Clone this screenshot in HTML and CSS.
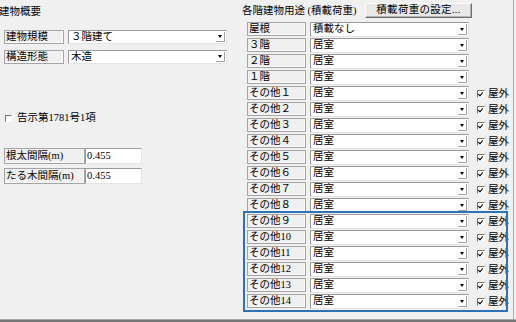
FILE: index.html
```html
<!DOCTYPE html>
<html lang="ja">
<head>
<meta charset="utf-8">
<link rel="stylesheet" href="styles.css">
</head>
<body>
<div class="window">
  <div class="left">
    <div class="title">建物概要</div>
    <div class="frow first">
      <span class="lbl w60">建物規模</span>
      <div class="combo w159"><span class="val">３階建て</span><span class="arrow"></span></div>
    </div>
    <div class="frow second">
      <span class="lbl w60">構造形態</span>
      <div class="combo w159"><span class="val">木造</span><span class="arrow"></span></div>
    </div>
    <div class="chkrow">
      <span class="cb"></span><span class="chktext">告示第1781号1項</span>
    </div>
    <div class="irow first">
      <span class="lbl w82 tall">根太間隔(m)</span>
      <span class="input">0.455</span>
    </div>
    <div class="irow next">
      <span class="lbl w82 tall">たる木間隔(m)</span>
      <span class="input">0.455</span>
    </div>
  </div>
  <div class="right">
    <div class="head">
      <span class="htitle">各階建物用途 (積載荷重)</span>
      <span class="btn">積載荷重の設定...</span>
    </div>
    <div class="rows">
      <div class="row"><span class="lbl w59">屋根</span><div class="combo w159"><span class="val">積載なし</span><span class="arrow"></span></div></div>
      <div class="row"><span class="lbl w59">３階</span><div class="combo w159"><span class="val">居室</span><span class="arrow"></span></div></div>
      <div class="row"><span class="lbl w59">２階</span><div class="combo w159"><span class="val">居室</span><span class="arrow"></span></div></div>
      <div class="row"><span class="lbl w59">１階</span><div class="combo w159"><span class="val">居室</span><span class="arrow"></span></div></div>
      <div class="row"><span class="lbl w59">その他１</span><div class="combo w159"><span class="val">居室</span><span class="arrow"></span></div><span class="cbx"></span><span class="out">屋外</span></div>
      <div class="row"><span class="lbl w59">その他２</span><div class="combo w159"><span class="val">居室</span><span class="arrow"></span></div><span class="cbx"></span><span class="out">屋外</span></div>
      <div class="row"><span class="lbl w59">その他３</span><div class="combo w159"><span class="val">居室</span><span class="arrow"></span></div><span class="cbx"></span><span class="out">屋外</span></div>
      <div class="row"><span class="lbl w59">その他４</span><div class="combo w159"><span class="val">居室</span><span class="arrow"></span></div><span class="cbx"></span><span class="out">屋外</span></div>
      <div class="row"><span class="lbl w59">その他５</span><div class="combo w159"><span class="val">居室</span><span class="arrow"></span></div><span class="cbx"></span><span class="out">屋外</span></div>
      <div class="row"><span class="lbl w59">その他６</span><div class="combo w159"><span class="val">居室</span><span class="arrow"></span></div><span class="cbx"></span><span class="out">屋外</span></div>
      <div class="row"><span class="lbl w59">その他７</span><div class="combo w159"><span class="val">居室</span><span class="arrow"></span></div><span class="cbx"></span><span class="out">屋外</span></div>
      <div class="row"><span class="lbl w59">その他８</span><div class="combo w159"><span class="val">居室</span><span class="arrow"></span></div><span class="cbx"></span><span class="out">屋外</span></div>
      <div class="row"><span class="lbl w59">その他９</span><div class="combo w159"><span class="val">居室</span><span class="arrow"></span></div><span class="cbx"></span><span class="out">屋外</span></div>
      <div class="row"><span class="lbl w59">その他10</span><div class="combo w159"><span class="val">居室</span><span class="arrow"></span></div><span class="cbx"></span><span class="out">屋外</span></div>
      <div class="row"><span class="lbl w59">その他11</span><div class="combo w159"><span class="val">居室</span><span class="arrow"></span></div><span class="cbx"></span><span class="out">屋外</span></div>
      <div class="row"><span class="lbl w59">その他12</span><div class="combo w159"><span class="val">居室</span><span class="arrow"></span></div><span class="cbx"></span><span class="out">屋外</span></div>
      <div class="row"><span class="lbl w59">その他13</span><div class="combo w159"><span class="val">居室</span><span class="arrow"></span></div><span class="cbx"></span><span class="out">屋外</span></div>
      <div class="row"><span class="lbl w59">その他14</span><div class="combo w159"><span class="val">居室</span><span class="arrow"></span></div><span class="cbx"></span><span class="out">屋外</span></div>
    </div>
  </div>
</div>
<div class="highlight"></div>
<div class="bottom"></div>
</body>
</html>
```

FILE: styles.css
```css
* { box-sizing: border-box; }
html, body { margin: 0; padding: 0; }
body {
  width: 516px;
  height: 322px;
  overflow: hidden;
  position: relative;
  background: #f0f0f0;
  color: #000;
  font-family: "Liberation Serif", "Noto Sans CJK JP", sans-serif;
  font-size: 10.5px;
}
.window { display: flex; height: 319px; }
.left { width: 242px; }
.title { margin-top: 2px; height: 20px; line-height: 20px; margin-left: -1px; }

.frow { display: flex; gap: 4px; margin-left: 4px; height: 14px; }
.frow.first { margin-top: 8px; }
.frow.second { margin-top: 6px; }

.lbl {
  display: block;
  height: 14px;
  line-height: 12px;
  padding-left: 1px;
  border: 1px solid #a4a4a4;
  box-shadow: inset -1px -1px 0 #fbfbfb;
  white-space: nowrap;
  overflow: hidden;
}
.w60 { width: 60px; }
.w59 { width: 59px; }
.w82 { width: 81px; }
.lbl.tall { height: 16px; line-height: 14px; }

.combo {
  display: flex;
  height: 15px;
  background: #fff;
  border: 1px solid;
  border-color: #9a9a9a #e4e4e4 #e4e4e4 #9a9a9a;
}
.frow .combo { height: 14px; }
.w159 { width: 159px; }
.val { flex: 1; line-height: 12px; padding-left: 2px; white-space: nowrap; }
.arrow {
  width: 9px;
  margin: 1px 1px 1px 0;
  border-right: 1px solid #a0a0a0;
  border-bottom: 1px solid #a0a0a0;
  display: flex;
  align-items: center;
  justify-content: center;
}
.arrow::before {
  content: "";
  border-left: 2.5px solid transparent;
  border-right: 2.5px solid transparent;
  border-top: 3px solid #000;
}

.chkrow { display: flex; align-items: center; height: 14px; margin-top: 47px; margin-left: 5px; }
.cb {
  width: 7px; height: 7px;
  border-top: 1px solid #707070;
  border-left: 1px solid #707070;
  border-right: 1px solid #f8f8f8;
  border-bottom: 1px solid #f8f8f8;
  background: #fff;
}
.chktext { margin-left: 5px; line-height: 14px; }

.irow { display: flex; margin-left: 4px; height: 16px; }
.irow.first { margin-top: 23px; }
.irow.next { margin-top: 4px; }
.input {
  display: block;
  width: 57px;
  height: 16px;
  background: #fff;
  border: 1px solid;
  border-color: #9a9a9a #e4e4e4 #e4e4e4 #9a9a9a;
  padding-left: 1px;
  line-height: 14px;
}

.right { width: 272px; border-right: 1px solid #acacac; }
.head { display: flex; height: 22px; }
.htitle { width: 123px; line-height: 22px; white-space: nowrap; }
.btn {
  width: 107px;
  height: 15px;
  margin-top: 3px;
  background: #e8e8e8;
  border: 1px solid;
  border-color: #fcfcfc #6f6f6f #6f6f6f #fcfcfc;
  box-shadow: inset -1px -1px 0 #b4b4b4;
  text-align: center;
  line-height: 12px;
  letter-spacing: 0.3px;
}
.rows { display: flex; flex-direction: column; }
.row { display: flex; align-items: flex-start; height: 16px; padding-left: 5px; }
.row .lbl { margin-right: 4px; }
.cbx {
  width: 8px; height: 8px;
  margin: 4px 0 0 8px;
  border-top: 1px solid #707070;
  border-left: 1px solid #707070;
  border-right: 1px solid #f8f8f8;
  border-bottom: 1px solid #f8f8f8;
  background: #fff;
  position: relative;
}
.cbx::after {
  content: "";
  position: absolute;
  left: 1px; top: 0px;
  width: 2px; height: 4px;
  border-right: 1.5px solid #000;
  border-bottom: 1.5px solid #000;
  transform: rotate(40deg);
}
.out { margin-left: 3px; line-height: 15px; white-space: nowrap; }

.highlight {
  position: absolute;
  left: 243px;
  top: 211px;
  width: 265px;
  height: 101px;
  border: 2px solid #2c72b5;
}
.bottom {
  height: 3px;
  border-top: 1px solid #a8a8a8;
  background: #767676;
}
```
